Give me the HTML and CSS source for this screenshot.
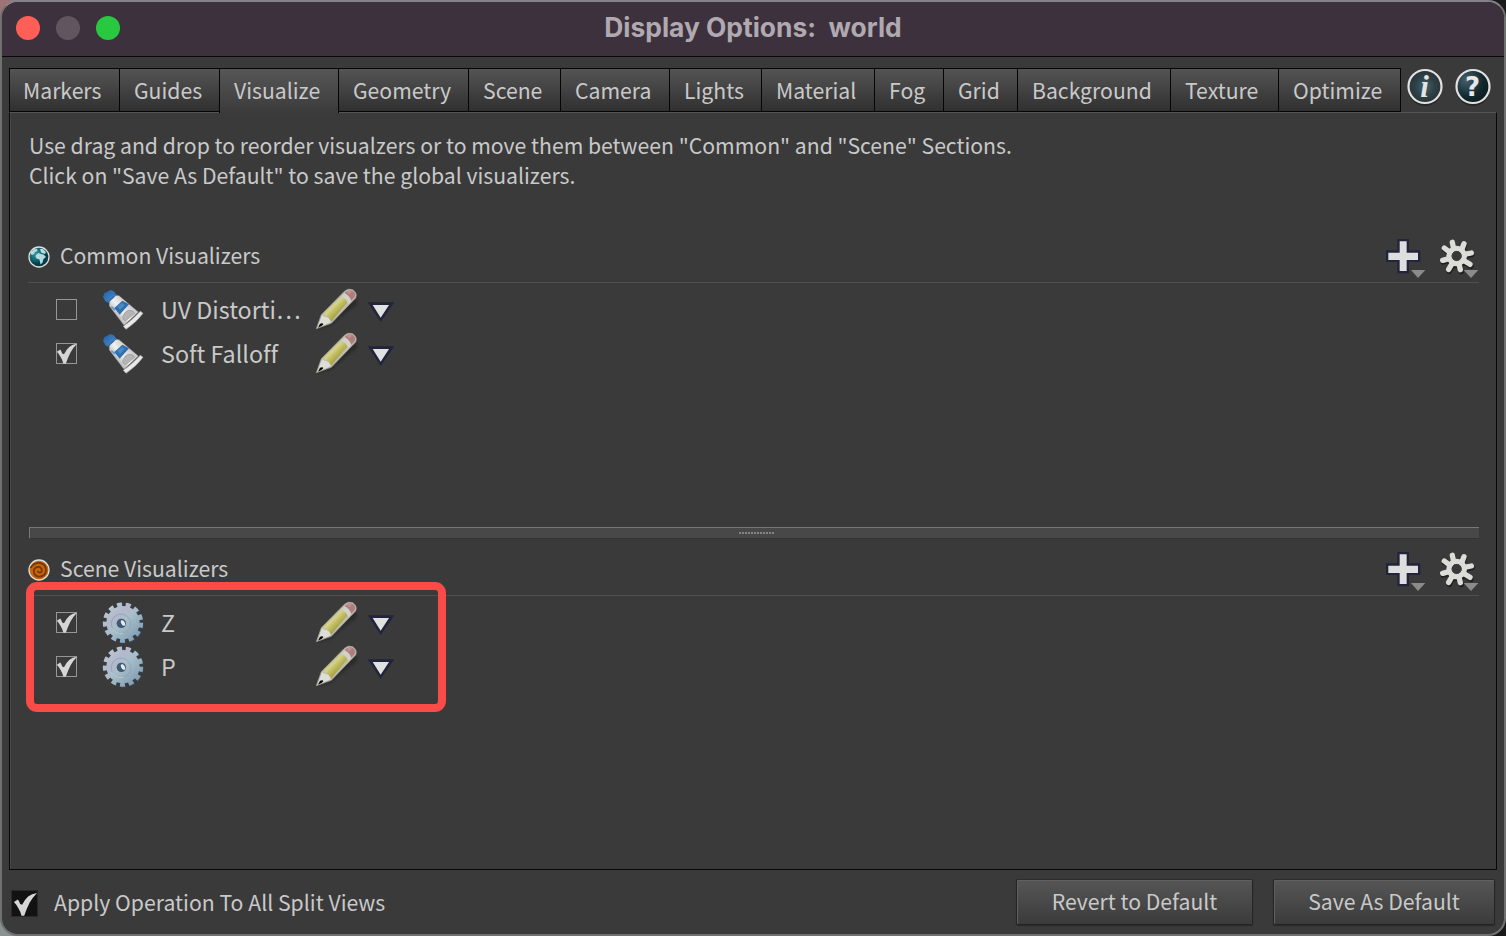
FILE: index.html
```
<!DOCTYPE html>
<html lang="en">
<head>
<meta charset="utf-8">
<title>Display Options: world</title>
<link rel="stylesheet" href="styles.css">
</head>
<body>
<svg class="defs" width="0" height="0">
  <defs>
    <linearGradient id="blue" x1="0" y1="0" x2="1" y2="1"><stop offset="0" stop-color="#1f5fa8"/><stop offset=".5" stop-color="#3779bb"/><stop offset="1" stop-color="#1d5594"/></linearGradient>
    <linearGradient id="tubeBody" gradientUnits="userSpaceOnUse" x1="285" y1="235" x2="325" y2="200"><stop offset="0" stop-color="#bdbdbd"/><stop offset=".4" stop-color="#f2f2f2"/><stop offset="1" stop-color="#c9c9c9"/></linearGradient>
    <linearGradient id="steel" gradientUnits="userSpaceOnUse" x1="262" y1="170" x2="352" y2="266"><stop offset="0" stop-color="#b9c9d2"/><stop offset=".3" stop-color="#b4b8cc"/><stop offset=".5" stop-color="#a9bfca"/><stop offset="1" stop-color="#809cb2"/></linearGradient>
    <linearGradient id="wood" gradientUnits="userSpaceOnUse" x1="85" y1="75" x2="115" y2="105"><stop offset="0" stop-color="#b3af62"/><stop offset=".3" stop-color="#d6d38f"/><stop offset=".6" stop-color="#c0bb5e"/><stop offset="1" stop-color="#a39f3e"/></linearGradient>
    <radialGradient id="disc"><stop offset="0" stop-color="#44616a"/><stop offset=".6" stop-color="#2d4046"/><stop offset="1" stop-color="#2b3336"/></radialGradient>
    <radialGradient id="disc2" cx=".3" cy=".3" r=".8"><stop offset="0" stop-color="#48606a"/><stop offset=".6" stop-color="#122a30"/><stop offset="1" stop-color="#0a1a1d"/></radialGradient>
    <radialGradient id="sea" cx=".35" cy=".35"><stop offset="0" stop-color="#3b98a3"/><stop offset=".7" stop-color="#0d5f6b"/><stop offset="1" stop-color="#063c46"/></radialGradient>
    <filter id="soft" x="-20%" y="-20%" width="140%" height="150%"><feGaussianBlur stdDeviation="3"/></filter>
  </defs>
  <symbol id="tick" viewBox="0 0 21 21"><path fill="#d6d6d6" d="M.8 8.800 4.300 6.600Q5.600 8.500 6.200 10.400L8 11.200Q10 7 13.200 4 16.500 1.300 21 .8 17.200 4.600 14.500 9.500 12 14.500 9.800 20.800H7.400Q6.500 17 4.600 14 3 11 .8 8.800Z"/></symbol>
  <symbol id="tube" viewBox="240 158 135 132">
    <path fill="url(#tubeBody)" stroke="#999" stroke-width="1" d="M268 202Q270 186 286 180L297 181 355 230 312 270 268 212Z"/>
    <path fill="#2f6fb0" d="M283 218 307 196 327 207 299 238Z"/>
    <path fill="#5b9bd2" d="M275 212 287 222 283 226 273 216Z"/>
    <path fill="#4a89c4" d="M292 214 306 202 314 210 300 224Z"/>
    <path fill="#b4b4b4" stroke="#969696" stroke-width="2" d="M308 246Q312 226 330 225 342 226 344 234L316 257Q307 252 308 246Z"/>
    <path fill="url(#blue)" d="M249 184 253 174 272 164 280 167 290 178 280 189 264 203 256 197Z"/>
    <path fill="none" stroke="#5590c9" stroke-width="2" d="M265 197Q270 182 286 178"/>
    <path fill="#e9e9e9" stroke="#a8a8a8" stroke-width="2" d="M310 273Q334 256 361 228L369 234Q350 260 318 282Z"/>
  </symbol>
  <symbol id="cog" viewBox="240 153 135 132">
    <g fill="#31465a" stroke="#31465a" transform="translate(2.500 2.500)">
      <circle cx="309" cy="218" r="48"/>
      <circle cx="309" cy="218" r="54" fill="none" stroke-width="13" stroke-dasharray="15 11.100"/>
    </g>
    <circle cx="309" cy="218" r="50" fill="url(#steel)"/>
    <circle cx="309" cy="218" r="54" fill="none" stroke="url(#steel)" stroke-width="13" stroke-dasharray="15 11.100"/>
    <circle cx="303" cy="221" r="29" fill="none" stroke="#8ea4b4" stroke-width="2.500"/>
    <path fill="none" stroke="#cad6de" stroke-width="2" d="M276 235Q289 254 310 250"/>
    <circle cx="304" cy="220" r="14" fill="#3e5870"/>
    <ellipse cx="309" cy="219" rx="5.500" ry="9" fill="#e6edf2" transform="rotate(-28 309 219)"/>
  </symbol>
  <symbol id="pencil" viewBox="39 24 144 132">
    <path fill="#222" opacity=".65" filter="url(#soft)" d="M52 148 88 139 171 72V55L150 70 76 132Z"/>
    <path fill="#bdbdb0" stroke="#a3a296" stroke-width="2" d="M49 146 64 104 132 35Q144 23 158 29 173 39 167 54L94 130Z"/>
    <path fill="url(#wood)" d="M70 100 127 46 145 64 93 125Q90 113 83 110 73 110 70 100Z"/>
    <path fill="#d0d1cd" d="M125 48 135 39Q148 48 155 61L146 73Q139 58 125 48Z"/>
    <path fill="#b07c7c" d="M134 39Q146 27 157 32 169 39 164 51L154 62Q149 47 134 39Z"/>
    <path fill="#c39292" d="M140 37Q148 29 155 34L149 43Z"/>
    <path fill="#deded9" d="M52 144 66 106Q74 112 80 112 90 116 92 127Z"/>
    <path fill="#080808" d="M54 143 60 131Q69 127 70 133 67 139 54 143Z"/>
  </symbol>
  <symbol id="arrow" viewBox="198 23 90 132"><path fill="#22243c" d="M203 66H283L242 125Z"/><path fill="#e2e2e2" d="M218 74H267L242 112Z"/></symbol>
  <symbol id="plus" viewBox="45 0 123 156">
    <path fill="#22243c" d="M82 27H117V61H151V96H117V130H82V96H48V61H82Z"/>
    <path fill="#dedede" d="M89 34H110V68H144V90H110V123H89V90H55V68H89Z"/>
    <path fill="#8b8b8b" d="M123 120H166L144 144Z"/>
  </symbol>
  <symbol id="gear" viewBox="204 0 126 156">
    <g fill="none" stroke="#202020" stroke-width="16" stroke-linecap="round" transform="translate(2 5)"><circle cx="260" cy="78" r="24"/><path d="M251 55 247 36M275 59 282 40M283 73 304 69M280 91 301 104M267 102 272 120M246 101 236 119M237 86 217 91M240 67 222 54"/></g>
    <g fill="none" stroke="#dcdcd8" stroke-width="16" stroke-linecap="round"><circle cx="260" cy="78" r="23"/><path d="M251 55 247 37M275 59 282 41M283 73 304 69M280 91 300 103M267 102 271 119M246 101 236 118M237 86 218 91M240 67 223 54"/></g>
    <circle cx="260" cy="78" r="14" fill="#383838" stroke="#4a4a4a" stroke-width="2"/>
    <path fill="#8b8b8b" d="M281 120H325L303 144Z"/>
  </symbol>
</svg>

<main class="window">
  <header class="titlebar">
    <div class="lights"><i class="light close"></i><i class="light minimize"></i><i class="light maximize"></i></div>
    <h1 class="title">Display Options:&nbsp; world</h1>
  </header>

  <nav class="tabbar">
    <div class="tabs">
      <div class="tab"><span>Markers</span></div><div class="tab"><span>Guides</span></div><div class="tab active"><span>Visualize</span></div><div class="tab"><span>Geometry</span></div><div class="tab"><span>Scene</span></div><div class="tab"><span>Camera</span></div><div class="tab"><span>Lights</span></div><div class="tab"><span>Material</span></div><div class="tab"><span>Fog</span></div><div class="tab"><span>Grid</span></div><div class="tab"><span>Background</span></div><div class="tab"><span>Texture</span></div><div class="tab"><span>Optimize</span></div>
    </div>
    <div class="help">
      <svg width="38" height="42" viewBox="0 0 38 42"><circle cx="19" cy="21" r="17" fill="#1c1c1c" opacity=".6"/><circle cx="19" cy="18.500" r="16.500" fill="url(#disc)" stroke="#e0e2e2" stroke-width="2.200"/><text x="18.500" y="28.800" class="info">i</text></svg>
      <svg width="38" height="42" viewBox="0 0 38 42"><circle cx="19" cy="21" r="17" fill="#1c1c1c" opacity=".6"/><circle cx="19" cy="18.500" r="16.500" fill="url(#disc2)" stroke="#e0e2e2" stroke-width="2.200"/><text x="18.500" y="28" class="question">?</text></svg>
    </div>
  </nav>

  <section class="panel">
    <div class="intro"><p>Use drag and drop to reorder visualzers or to move them between "Common" and "Scene" Sections.</p><p>Click on "Save As Default" to save the global visualizers.</p></div>

    <section class="group common">
      <header class="group-head">
        <svg class="badge" viewBox="0 0 22 22"><circle cx="11" cy="11" r="10" fill="url(#sea)" stroke="#dedfdc" stroke-width="1.300"/><path fill="#b4dbe0" d="M3 6 6 3.200 9 3 9.500 5 7 6 6 8 4 9 2.800 8ZM8 9 10.500 7 13 8 15.500 8.500 18 11 15.500 13 14.500 16.500 12.500 18.500 11.500 13.500 8.500 12.500 7.500 10.500ZM12 3 15 3 18 6 17 8 13 6.500Z"/></svg>
        <h2>Common Visualizers</h2>
        <div class="actions"><svg class="plus"><use href="#plus"/></svg><svg class="gear"><use href="#gear"/></svg></div>
      </header>
      <div class="row"><span class="check"></span><svg class="kind"><use href="#tube"/></svg><span class="name">UV Distorti…</span><svg class="edit"><use href="#pencil"/></svg><svg class="menu"><use href="#arrow"/></svg></div>
      <div class="row"><span class="check"><svg><use href="#tick"/></svg></span><svg class="kind"><use href="#tube"/></svg><span class="name">Soft Falloff</span><svg class="edit"><use href="#pencil"/></svg><svg class="menu"><use href="#arrow"/></svg></div>
    </section>

    <div class="splitter"><span class="grip"></span></div>

    <section class="group scene">
      <header class="group-head">
        <svg class="badge" viewBox="0 0 22 22"><circle cx="11" cy="11" r="10" fill="#c96409" stroke="#dedfdc" stroke-width="1.300"/><path fill="none" stroke="#70380b" stroke-width="1.800" d="M2.500 9Q6 3.500 12 4 18 5 18 11.500 17 18 10.500 17.700 5.500 16.500 5.800 11.500 7 7.500 11.500 8 14.800 9.500 13.500 13 11 14.500 9.500 12"/></svg>
        <h2>Scene Visualizers</h2>
        <div class="actions"><svg class="plus"><use href="#plus"/></svg><svg class="gear"><use href="#gear"/></svg></div>
      </header>
      <div class="row"><span class="check"><svg><use href="#tick"/></svg></span><svg class="kind"><use href="#cog"/></svg><span class="name">Z</span><svg class="edit"><use href="#pencil"/></svg><svg class="menu"><use href="#arrow"/></svg></div>
      <div class="row"><span class="check"><svg><use href="#tick"/></svg></span><svg class="kind"><use href="#cog"/></svg><span class="name">P</span><svg class="edit"><use href="#pencil"/></svg><svg class="menu"><use href="#arrow"/></svg></div>
      <div class="highlight"></div>
    </section>
  </section>

  <footer class="footer">
    <span class="bigcheck"><svg><use href="#tick"/></svg></span>
    <span class="apply">Apply Operation To All Split Views</span>
    <button class="btn revert">Revert to Default</button>
    <button class="btn save">Save As Default</button>
  </footer>
</main>
</body>
</html>
```
FILE: styles.css
```
* { box-sizing: border-box; }
html, body { margin: 0; width: 1506px; height: 936px; overflow: hidden; }
body {
  background: linear-gradient(90deg, transparent 50%, #191919 50%), linear-gradient(#9d7476 50%, #899392 50%);
  font: 21.2px/30px "Noto Sans CJK SC", "Noto Sans", sans-serif;
  font-variant-ligatures: none;
  color: #c9c9c9;
}
h1, h2, p { margin: 0; font-weight: 400; }
svg { display: block; flex: none; }
.defs { position: absolute; }

.window {
  width: 1506px; height: 936px;
  border: 2px solid #707070; border-top-color: #85838a; border-radius: 18px;
  background: #3a3a3a; overflow: hidden;
  display: flex; flex-direction: column;
}
.titlebar {
  height: 55px; flex: none; background: #3d313e; border-bottom: 1px solid #080808;
  display: grid; grid-template-columns: 1fr auto 1fr; align-items: center;
}
.lights { display: flex; gap: 16px; padding: 0 0 2px 14px; }
.light { width: 24px; height: 24px; border-radius: 50%; }
.close { background: #ff5f57; }
.minimize { background: #61555f; }
.maximize { background: #28c840; }
.title { font: 700 26.4px/50px Inter, sans-serif; color: #b0a9b0; padding-bottom: 4px; white-space: pre; }

.tabbar { height: 55px; flex: none; padding: 11px 0 0 7px; display: flex; }
.tabs { display: flex; height: 44px; }
.tab {
  border: 1px solid #050505; margin-right: -1px; padding: 0 0 0 14px;
  background: linear-gradient(#545454, #303030);
  display: flex; align-items: center; white-space: nowrap;
}
.tab.active { background: linear-gradient(#565656, #3b3b3b); border-bottom: 0; height: 45px; padding-bottom: 2px; position: relative; }
.tab:nth-child(1) { width: 111px; padding-left: 13px; }
.tab:nth-child(2) { width: 101px; }
.tab:nth-child(3) { width: 120px; }
.tab:nth-child(4) { width: 131px; }
.tab:nth-child(5) { width: 93px; }
.tab:nth-child(6) { width: 110px; }
.tab:nth-child(7) { width: 93px; }
.tab:nth-child(8) { width: 114px; }
.tab:nth-child(9) { width: 70px; }
.tab:nth-child(10) { width: 75px; }
.tab:nth-child(11) { width: 154px; }
.tab:nth-child(12) { width: 109px; }
.tab:nth-child(13) { width: 123px; }
.help { display: flex; gap: 10px; margin-left: 6px; }
.info { font: italic bold 31px "Liberation Serif", serif; fill: #e2e5e5; text-anchor: middle; }
.question { font: bold 26px "DejaVu Sans", sans-serif; fill: #e8e8e8; text-anchor: middle; }

.panel {
  margin: 0 7px; height: 758px; flex: none;
  border: 1px solid #080808; border-top-color: #555; box-shadow: inset 1px 0 #484848;
  padding: 17px 17px 0 19px;
}
.intro { height: 100px; white-space: nowrap; }
.group { position: relative; }
.common { height: 297px; }
.group-head {
  height: 53px; margin-bottom: 5px; border-bottom: 1px solid #505050;
  display: flex; align-items: center; margin-left: -1px;
}
.badge { width: 22px; height: 22px; margin-top: 2px; }
.group-head h2 { font-size: 21.2px; line-height: 30px; margin: 0 0 3px 10px; }
.actions { margin-left: auto; display: flex; gap: 12px; align-self: flex-start; margin-right: -1px; }
.plus { width: 41px; height: 52px; }
.gear { width: 42px; height: 52px; }
.row { height: 44px; display: flex; align-items: center; padding-left: 27px; }
.check { width: 21px; height: 21px; border: 1px solid #969696; display: flex; margin-bottom: 2px; }
.check svg { width: 21px; height: 21px; margin: -1px; overflow: visible; }
.kind { width: 45px; height: 44px; margin-left: 23px; }
.name { width: 152px; margin: 0 0 2px 16px; font-size: 23.3px; white-space: nowrap; }
.edit { width: 48px; height: 44px; }
.menu { width: 30px; height: 44px; margin-left: 5px; }
.splitter {
  height: 12px; background: #484848; border-top: 1px solid #777; border-left: 1px solid #777; border-bottom: 1px solid #333;
  display: flex; align-items: center; justify-content: center; margin-bottom: 4px; padding-left: 4px;
}
.grip { width: 35px; height: 2px; background: repeating-linear-gradient(90deg, #858585 0 2px, #484848 2px 3px); }
.highlight {
  position: absolute; left: -3px; top: 39px; width: 420px; height: 130px;
  border: 8px solid #f94b47; border-radius: 11px;
}

.footer { flex: 1; display: flex; align-items: flex-start; padding: 9px 9px 0 9px; }
.bigcheck { width: 27px; height: 27px; background: #121212; border: 1px solid #292929; margin-top: 11px; display: flex; }
.bigcheck svg { width: 24px; height: 24px; margin: 1px 0 0 1px; }
.apply { margin: 8px 0 0 16px; white-space: nowrap; letter-spacing: .02px; }
.btn {
  height: 46px; padding: 0 0 3px; font: inherit; font-variant-ligatures: none; color: inherit; white-space: nowrap;
  background: linear-gradient(#565656, #3b3b3b);
  border: 1px solid #242424; border-top-color: #2c2c2c; border-radius: 2px;
  box-shadow: inset 1px 1px #606060, 0 1px 1px #2a2a2a;
}
.revert { width: 237px; margin-left: auto; }
.save { width: 222px; margin-left: 20px; }
```
